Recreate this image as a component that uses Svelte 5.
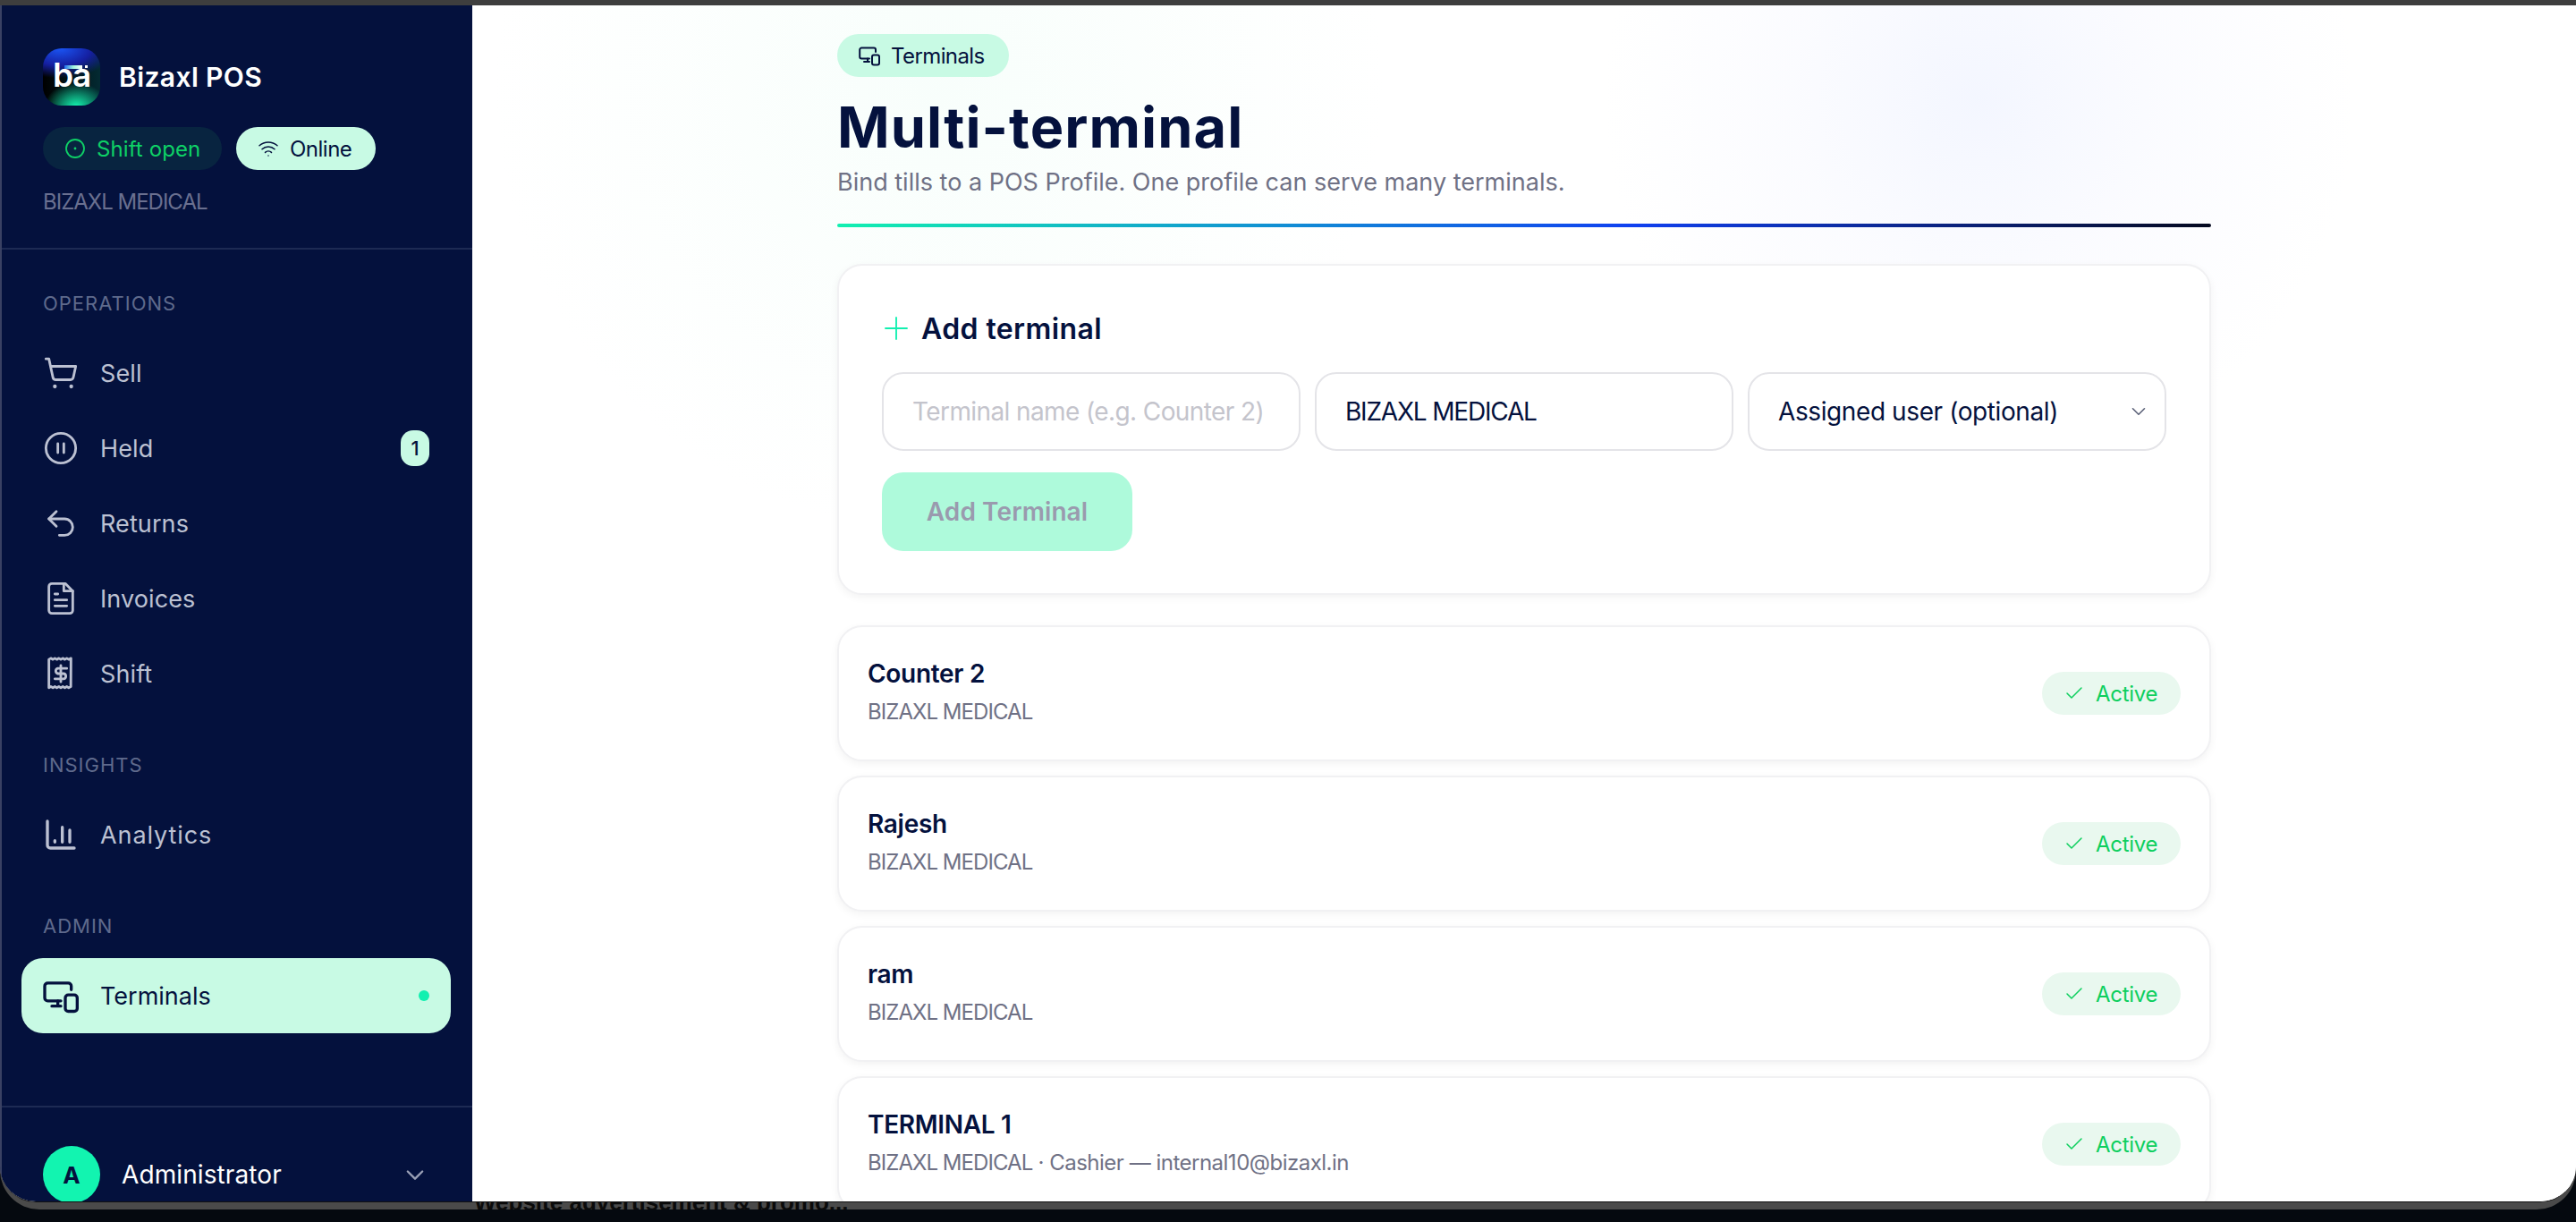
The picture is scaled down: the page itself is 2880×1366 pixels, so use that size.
<script>
  const rowsA = [
    { name: 'Counter 2', sub: 'BIZAXL MEDICAL', extra: '' },
    { name: 'Rajesh', sub: 'BIZAXL MEDICAL', extra: '' },
    { name: 'ram', sub: 'BIZAXL MEDICAL', extra: '' },
    { name: 'TERMINAL 1', sub: 'BIZAXL MEDICAL', extra: ' · Cashier — internal10@bizaxl.in' }
  ];
</script>

<div class="screen">
  <div class="topbar"></div>
  <div class="bezel">
    <span class="behind">Website advertisement &amp; promo...</span>
    <div class="window">
      <aside class="sidebar">
        <div class="brand">
          <div class="brandrow">
            <div class="logo">
              <span class="logobar"></span><span class="logodot"></span>
              <span class="logotext">ba</span>
            </div>
            <span class="brandname">Bizaxl POS</span>
          </div>
          <div class="pills">
            <span class="pill shift">
              <svg class="i22" viewBox="0 0 24 24"><circle cx="12" cy="12" r="10"/><circle cx="12" cy="12" r="1.4" class="fillc"/></svg>
              Shift open
            </span>
            <span class="pill online">
              <svg class="i24" viewBox="0 0 24 24"><path d="M2 8.8a15 15 0 0 1 20 0"/><path d="M5 12.8a10 10 0 0 1 14 0"/><path d="M8.5 16.4a5 5 0 0 1 7 0"/><path d="M12 20h.01"/></svg>
              Online
            </span>
          </div>
          <div class="company">BIZAXL MEDICAL</div>
        </div>

        <nav class="nav">
          <div class="label first">OPERATIONS</div>
          <div class="item">
            <svg class="i40" viewBox="0 0 24 24"><circle cx="8" cy="21" r="1.3" class="fillc"/><circle cx="19" cy="21" r="1.3" class="fillc"/><path d="M2 2.5h2l2.7 12.4a2 2 0 0 0 2 1.6h9.8a2 2 0 0 0 1.9-1.6L22 7.5H5.1"/></svg>
            <span class="itemtext">Sell</span>
          </div>
          <div class="item">
            <svg class="i40" viewBox="0 0 24 24"><circle cx="12" cy="12" r="10"/><path d="M10 15V9M14 15V9"/></svg>
            <span class="itemtext">Held</span>
            <span class="badge">1</span>
          </div>
          <div class="item">
            <svg class="i40" viewBox="0 0 24 24"><path d="M9 14 4 9l5-5"/><path d="M4 9h10.5a5.5 5.5 0 0 1 5.5 5.5 5.5 5.5 0 0 1-5.5 5.5H11"/></svg>
            <span class="itemtext">Returns</span>
          </div>
          <div class="item">
            <svg class="i40" viewBox="0 0 24 24"><path d="M15 2H6a2 2 0 0 0-2 2v16a2 2 0 0 0 2 2h12a2 2 0 0 0 2-2V7Z"/><path d="M14 2v5h6"/><path d="M16 13H8M16 17H8M10 9H8"/></svg>
            <span class="itemtext">Invoices</span>
          </div>
          <div class="item">
            <svg class="i40" viewBox="0 0 24 24"><path d="M4 2.5v19l1.3-.8 1.4.8 1.3-.8 1.3.8 1.4-.8 1.3.8 1.3-.8 1.4.8 1.3-.8 1.3.8 1.4-.8.1-19-1.5.8-1.3-.8-1.3.8-1.4-.8-1.3.8-1.3-.8-1.4.8-1.3-.8-1.3.8-1.4-.8Z"/><path d="M16 8.5h-6a1.8 1.8 0 0 0 0 3.5h4a1.8 1.8 0 0 1 0 3.5H8M12 6.5v11"/></svg>
            <span class="itemtext">Shift</span>
          </div>

          <div class="label">INSIGHTS</div>
          <div class="item">
            <svg class="i40 heavy" viewBox="0 0 24 24"><path d="M3 3v16a2 2 0 0 0 2 2h16"/><path d="M8 17v-1M13 17V7M18 17V9"/></svg>
            <span class="itemtext wide">Analytics</span>
          </div>

          <div class="label">ADMIN</div>
          <div class="item active">
            <svg class="i40 heavy" viewBox="0 0 24 24"><path d="M19 8V5.5a2 2 0 0 0-2-2H3.2a2 2 0 0 0-2 2v8a2 2 0 0 0 2 2H12"/><path d="M6 19h6M10 15.5V19"/><rect x="15" y="11.5" width="8" height="11" rx="2"/></svg>
            <span class="itemtext">Terminals</span>
            <span class="dot"></span>
          </div>
        </nav>

        <div class="foot">
          <span class="avatar">A</span>
          <span class="user">Administrator</span>
          <svg class="i28 chev" viewBox="0 0 24 24"><path d="m5 9 7 7 7-7"/></svg>
        </div>
      </aside>

      <main class="main">
        <div class="content">
          <span class="tag">
            <svg class="i24 heavy" viewBox="0 0 24 24"><path d="M19 8V5.5a2 2 0 0 0-2-2H3.2a2 2 0 0 0-2 2v8a2 2 0 0 0 2 2H12"/><path d="M6 19h6M10 15.5V19"/><rect x="15" y="11.5" width="8" height="11" rx="2"/></svg>
            Terminals
          </span>
          <h1>Multi-terminal</h1>
          <p class="subtitle">Bind tills to a POS Profile. One profile can serve many terminals.</p>
          <div class="rule"></div>

          <section class="card">
            <h2>
              <svg class="i32" viewBox="0 0 24 24"><path d="M12 3v18M3 12h18"/></svg>
              Add terminal
            </h2>
            <div class="fields">
              <input class="field name" placeholder="Terminal name (e.g. Counter 2)" />
              <input class="field profile" value="BIZAXL MEDICAL" />
              <div class="selectwrap">
                <select class="field sel"><option>Assigned user (optional)</option></select>
                <svg class="selchev" viewBox="0 0 24 24"><path d="m6 9 6 6 6-6"/></svg>
              </div>
            </div>
            <button class="add" disabled>Add Terminal</button>
          </section>

          <div class="list">
            {#each rowsA as r}
              <div class="row">
                <div class="rowtext">
                  <div class="rowname">{r.name}</div>
                  <div class="rowsub">{r.sub}<span class="extra">{r.extra}</span></div>
                </div>
                <span class="status">
                  <svg class="i24" viewBox="0 0 24 24"><path d="M20 6 9 17l-5-5"/></svg>
                  Active
                </span>
              </div>
            {/each}
          </div>
        </div>
      </main>
    </div>
  </div>
</div>

<style>
  :global(body) {
    margin: 0;
    background: #05090f;
    overflow: hidden;
  }
  .screen {
    width: 2880px;
    height: 1366px;
    background: #05090f;
    overflow: hidden;
    font-family: Inter, "Noto Sans", sans-serif;
    color: #04113d;
  }
  svg {
    fill: none;
    stroke: currentColor;
    stroke-width: 1.5;
    stroke-linecap: round;
    stroke-linejoin: round;
    flex: none;
  }
  .fillc { fill: currentColor; stroke: none; }
  .heavy { stroke-width: 2; }
  .i22 { width: 24px; height: 24px; stroke-width: 1.8; }
  .i24 { width: 24px; height: 24px; }
  .i28 { width: 28px; height: 28px; }
  .i32 { width: 32px; height: 32px; }
  .i40 { width: 40px; height: 40px; stroke-width: 1.7; }
  .i40.heavy { stroke-width: 2; }

  .topbar { height: 6px; background: #3e3e3e; }
  .bezel {
    position: relative;
    height: 1346px;
    background: #4a4a4a;
    border-radius: 0 0 44px 44px;
    overflow: hidden;
  }
  .behind {
    position: absolute;
    left: 530px;
    top: 1323px;
    font: 700 26px "Liberation Sans", sans-serif;
    color: #0b0b0b;
    white-space: nowrap;
  }
  .window {
    position: relative;
    display: flex;
    height: 1338px;
    background: #fff;
    border-radius: 0 0 40px 40px;
    overflow: hidden;
    border-bottom: 1px solid #111;
    box-sizing: border-box;
  }

  .sidebar {
    width: 528px;
    flex: none;
    box-sizing: border-box;
    background: #04113d;
    border-left: 2px solid #3a4163;
    display: flex;
    flex-direction: column;
    color: #fff;
  }
  .brand {
    height: 273px;
    box-sizing: border-box;
    padding: 48px 46px 0;
    border-bottom: 2px solid #1d2a53;
    flex: none;
  }
  .brandrow { display: flex; align-items: center; gap: 21px; }
  .logo {
    position: relative;
    width: 64px;
    height: 64px;
    border-radius: 21px;
    overflow: hidden;
    background:
      radial-gradient(ellipse 55% 42% at 58% 102%, #14f5b0 0%, rgba(16,190,140,.75) 45%, rgba(0,80,70,0) 100%),
      radial-gradient(ellipse 95% 52% at 30% 0%, #1a55f5 0%, #151fa0 58%, rgba(10,10,90,0) 100%),
      linear-gradient(90deg, #000 0%, #032a32 100%);
  }
  .logotext {
    position: absolute;
    left: 11px;
    top: 4px;
    font: 600 37px/52px Inter, sans-serif;
    letter-spacing: -1.5px;
    color: #fff;
  }
  .logobar {
    position: absolute;
    left: 24px;
    top: 19px;
    width: 20px;
    height: 4px;
    background: linear-gradient(90deg, #1f6cf0, #9ff5dd, #fff);
    z-index: 1;
  }
  .logodot {
    position: absolute;
    left: 47px;
    top: 19px;
    width: 3px;
    height: 3px;
    background: #fff;
    z-index: 1;
  }
  .brandname { font-size: 30px; font-weight: 600; letter-spacing: 0.4px; }
  .pills { display: flex; gap: 16px; margin-top: 24px; }
  .pill {
    height: 48px;
    display: inline-flex;
    align-items: center;
    gap: 12px;
    border-radius: 24px;
    box-sizing: border-box;
    font-size: 24px;
  }
  .shift { width: 200px; padding-left: 24px; background: #082440; color: #0ed166; letter-spacing: 0.1px; }
  .online { width: 156px; padding-left: 24px; background: #c8fae4; color: #04113d; letter-spacing: -0.5px; }
  .company {
    margin-top: 22px;
    font-size: 24px;
    line-height: 28px;
    color: #6a7090;
    letter-spacing: -1px;
  }

  .nav { flex: 1; padding: 0 24px 0 22px; }
  .label {
    height: 32px;
    margin: 44px 0 20px 24px;
    font-size: 22px;
    line-height: 32px;
    color: #5f6a8c;
    letter-spacing: 1px;
  }
  .item {
    height: 84px;
    display: flex;
    align-items: center;
    gap: 24px;
    padding: 0 24px;
    box-sizing: border-box;
    border-radius: 24px;
    color: #bcc1d2;
  }
  .itemtext { font-size: 27px; letter-spacing: 0.1px; flex: 1; }
  .itemtext.wide { letter-spacing: 0.9px; }
  .badge {
    width: 32px;
    height: 40px;
    border-radius: 14px;
    background: #c8fae4;
    color: #04113d;
    font-size: 22px;
    font-weight: 500;
    display: flex;
    align-items: center;
    justify-content: center;
  }
  .active { background: #c8fae4; color: #04113d; }
  .active .itemtext { letter-spacing: 0; }
  .dot {
    width: 12px;
    height: 12px;
    border-radius: 50%;
    background: #12f0b0;
  }
  .foot {
    height: 107px;
    flex: none;
    box-sizing: border-box;
    border-top: 2px solid #1d2a53;
    padding: 43px 46px 0;
    display: flex;
    align-items: flex-start;
  }
  .avatar {
    width: 64px;
    height: 64px;
    border-radius: 50%;
    background: #12f4b0;
    color: #04113d;
    font-size: 26px;
    font-weight: 700;
    display: flex;
    align-items: center;
    justify-content: center;
    flex: none;
  }
  .user {
    flex: 1;
    margin-left: 24px;
    font-size: 28px;
    line-height: 64px;
    letter-spacing: 0.1px;
  }
  .chev { margin-top: 18px; margin-right: 4px; color: #9aa0b6; stroke-width: 2; }

  .main {
    flex: 1;
    min-width: 0;
    background:
      radial-gradient(circle 420px at 2213px 105px, rgba(225,232,255,.38) 0%, rgba(235,238,255,.2) 50%, rgba(255,255,255,0) 100%) -528px 0 no-repeat,
      radial-gradient(circle 500px at 1050px 90px, rgba(215,250,235,.18) 0%, rgba(255,255,255,0) 100%) -528px 0 no-repeat,
      #fff;
    background-size: 2880px 1338px;
    overflow: hidden;
  }
  .content {
    width: 1536px;
    margin: 0 auto;
    padding-top: 32px;
  }
  .tag {
    height: 48px;
    width: 192px;
    box-sizing: border-box;
    padding-left: 24px;
    display: flex;
    align-items: center;
    gap: 12px;
    background: #c8fae4;
    border-radius: 24px;
    font-size: 24px;
    letter-spacing: -0.6px;
  }
  h1 {
    margin: 20px 0 0;
    height: 72px;
    font-size: 63px;
    line-height: 72px;
    font-weight: 700;
    letter-spacing: 1.1px;
  }
  .subtitle {
    margin: 8px 0 0;
    height: 36px;
    font-size: 27px;
    line-height: 36px;
    color: #6f7185;
    letter-spacing: 0;
  }
  .rule {
    margin-top: 28px;
    height: 4px;
    border-radius: 2px;
    background: linear-gradient(90deg, #12f0b0 0%, #1040f0 58%, #05091f 100%);
  }
  .card {
    margin-top: 41px;
    height: 370px;
    box-sizing: border-box;
    padding: 48px;
    border: 2px solid #f1f1f3;
    border-radius: 28px;
    background: #fff;
    box-shadow: 0 3px 10px rgba(0,0,0,.05);
  }
  h2 {
    margin: 0;
    height: 44px;
    display: flex;
    align-items: center;
    gap: 12px;
    font-size: 32px;
    font-weight: 600;
    letter-spacing: 0.4px;
  }
  h2 svg { color: #12f0b0; stroke-width: 1.4; }
  .fields {
    margin-top: 27px;
    display: grid;
    grid-template-columns: repeat(3, 1fr);
    gap: 16px;
  }
  .field {
    width: 100%;
    height: 88px;
    box-sizing: border-box;
    padding: 0 32px;
    border: 2px solid #e4e4e8;
    border-radius: 24px;
    background: #fff;
    font: 400 28px Inter, sans-serif;
    letter-spacing: -0.6px;
    color: #04113d;
    outline: none;
    appearance: none;
    margin: 0;
  }
  .field.profile { letter-spacing: -1.2px; }
  .field.sel { letter-spacing: -0.4px; }
  .field::placeholder { color: #c4c4cc; opacity: 1; }
  .selectwrap { position: relative; }
  .selchev { position: absolute; right: 18px; top: 31px; width: 26px; height: 26px; color: #5c6278; pointer-events: none; }
  .add {
    margin-top: 24px;
    width: 280px;
    height: 88px;
    border: 0;
    border-radius: 24px;
    background: #aefadb;
    color: #9a9aae;
    font: 600 28px Inter, sans-serif;
    letter-spacing: 0.1px;
    display: block;
  }
  .list {
    margin-top: 34px;
    display: flex;
    flex-direction: column;
    gap: 16px;
  }
  .row {
    height: 152px;
    box-sizing: border-box;
    padding: 0 32px;
    border: 2px solid #f1f1f3;
    border-radius: 28px;
    background: #fff;
    box-shadow: 0 3px 10px rgba(0,0,0,.05);
    display: flex;
    align-items: center;
    justify-content: space-between;
  }
  .rowtext { padding-bottom: 3px; }
  .rowname { font-size: 28px; line-height: 36px; font-weight: 600; letter-spacing: -0.3px; }
  .rowsub { margin-top: 9px; font-size: 24px; line-height: 32px; color: #6f7185; letter-spacing: -0.95px; }
  .extra { letter-spacing: -0.5px; }
  .status {
    width: 155px;
    height: 48px;
    box-sizing: border-box;
    padding-left: 24px;
    display: flex;
    align-items: center;
    gap: 12px;
    border-radius: 24px;
    background: #e9f8ef;
    color: #0dcf5e;
    font-size: 24px;
    letter-spacing: -0.3px;
  }
</style>
